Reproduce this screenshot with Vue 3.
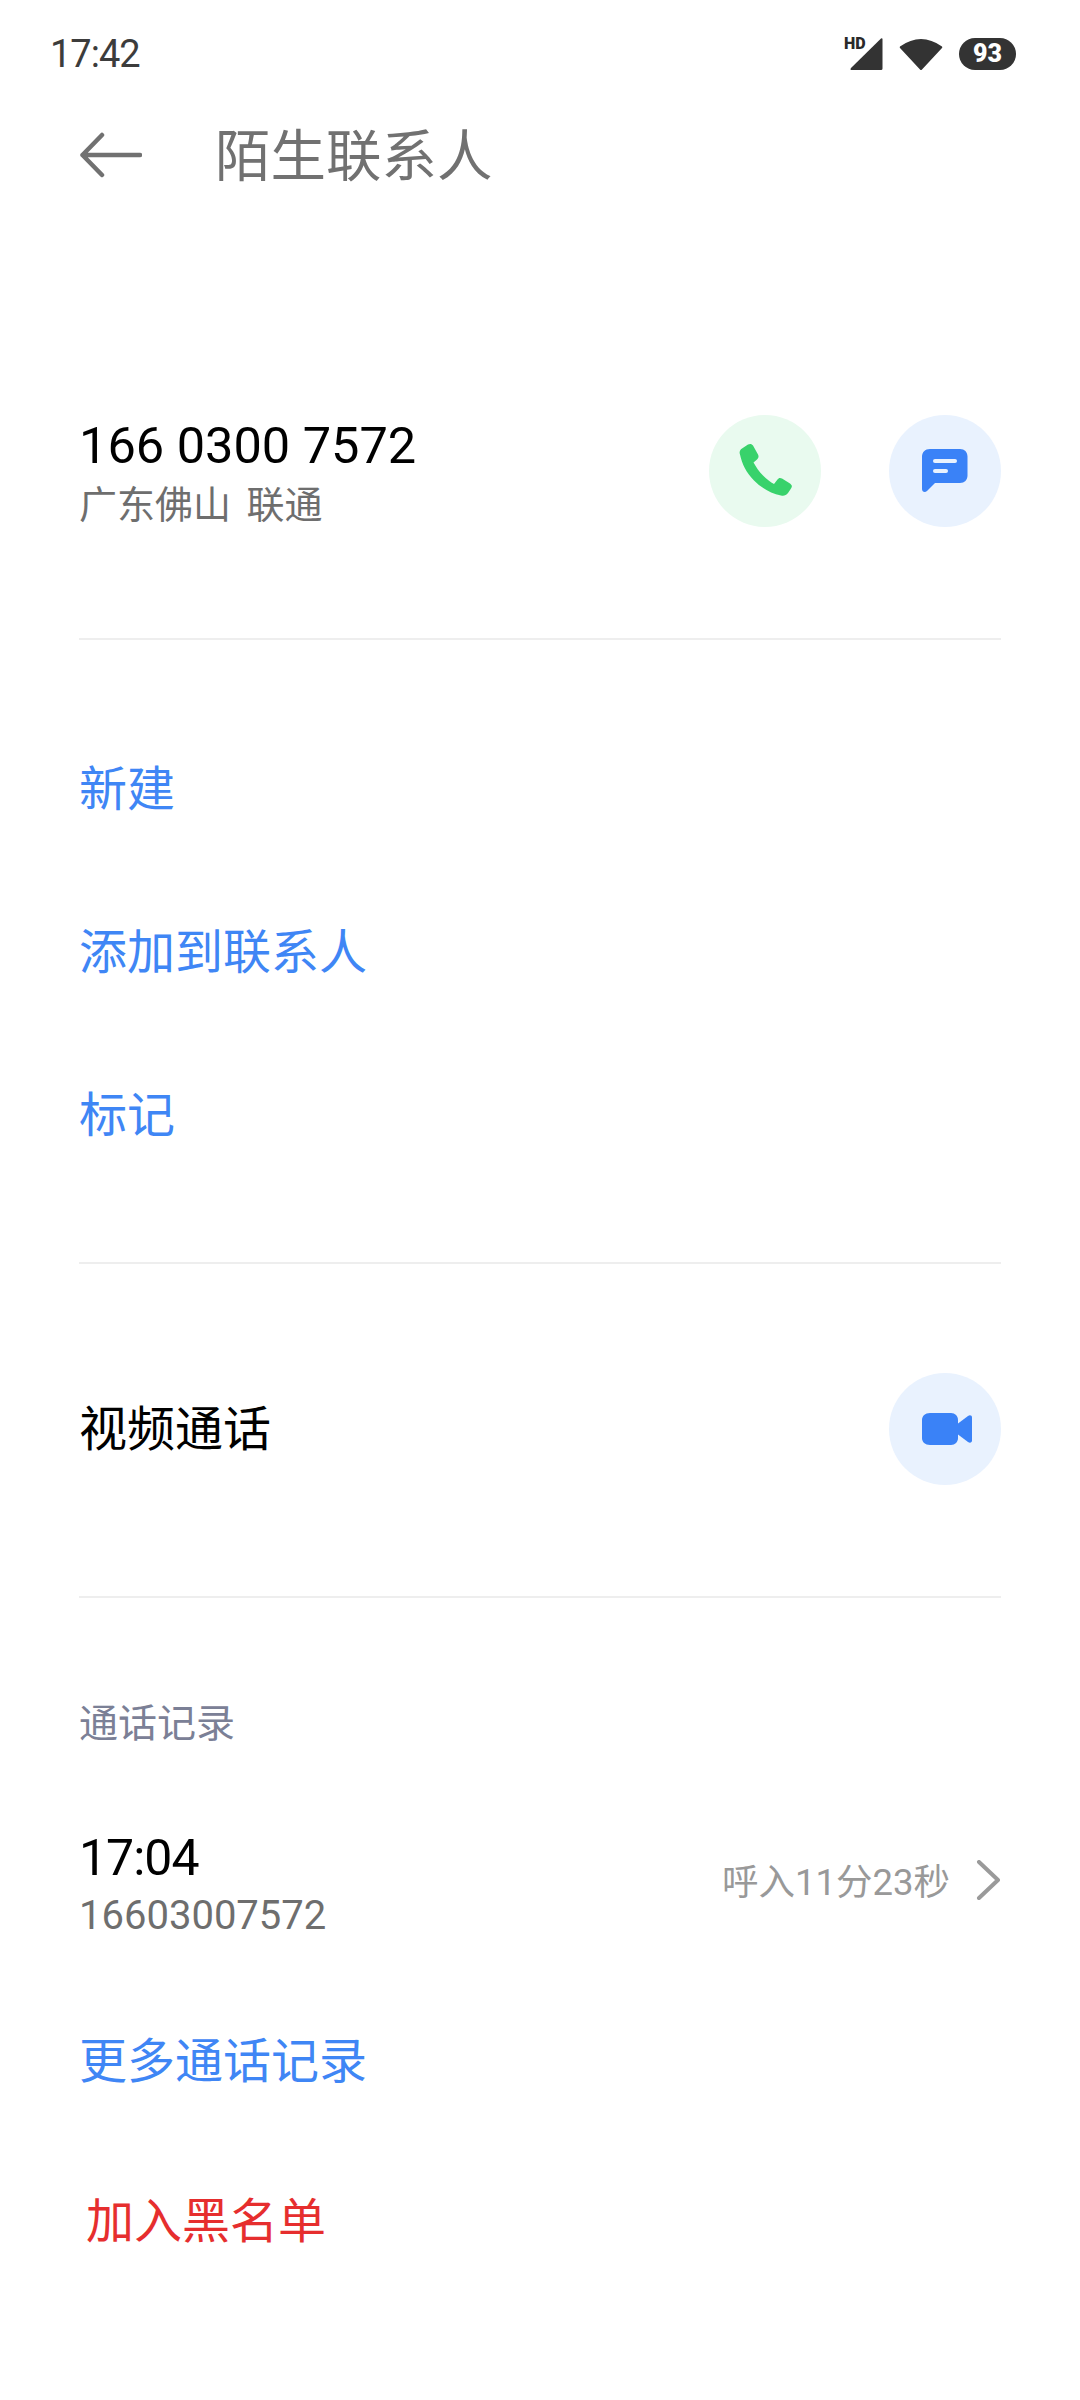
<template>
  <div class="page">
    <div class="status-bar">
      <span class="clock">17:42</span>
      <div class="status-icons">
        <div class="signal">
          <span class="hd">HD</span>
          <svg width="34" height="34" viewBox="0 0 34 34"><path d="M32 1.500Q33.500 0.500 33.500 2.500V31.500Q33.500 33 32 33H3Q0.500 33 2 31Z" fill="#333"/></svg>
        </div>
        <svg class="wifi" width="44" height="34" viewBox="0 0 44 34"><path d="M1 9.500Q22 -5.500 43 9.500Q43.500 10.500 43 11L23 32.500Q22 33.500 21 32.500L1 11Q0.500 10.500 1 9.500Z" fill="#333"/></svg>
        <span class="battery">93</span>
      </div>
    </div>

    <div class="app-bar">
      <svg class="back" width="63" height="46" viewBox="0 0 63 46" fill="none" stroke="#717171" stroke-width="4.500" stroke-linecap="round" stroke-linejoin="round"><path d="M61 23H3.500M23 3L3.500 23L23 43"/></svg>
      <span class="title">陌生联系人</span>
    </div>

    <section class="contact">
      <div class="contact-info">
        <div class="number">166 0300 7572</div>
        <div class="location">广东佛山 联通</div>
      </div>
      <div class="circle green">
        <svg width="56" height="56" viewBox="0 0 56 56"><path d="M3 11.500C2 9 3 7 5 5.500L11 1.500C13 0.500 15 1 16 2.500L21 11.500C22 13.500 21.500 15 20 16.500L16.500 19.500C19 24 22 28.500 26 32.500C30 36.500 33.500 39 37 41L40.500 36.500C41.500 35 43 34.500 45 35.500L53 40.500C55 42 55.500 43.500 54 45.500L51 50C49 52.500 47 53 44 52.500C34 50.500 25 45.500 17 37.500C9.500 30 5 21 3 11.500Z" fill="#38d26b"/></svg>
      </div>
      <div class="circle blue">
        <svg width="46" height="44" viewBox="0 0 46 44"><path d="M8 0H38C42.500 0 45.500 3 45.500 7.500V26.500C45.500 31 42.500 34 38 34H13L5 42C3 44 0 43 0 40V8C0 3 3 0 8 0Z" fill="#3a82f7"/><rect x="11" y="10" width="24" height="4" rx="2" fill="#e9f2fe"/><rect x="11" y="20" width="15" height="4" rx="2" fill="#e9f2fe"/></svg>
      </div>
    </section>

    <hr class="rule" />

    <section class="actions">
      <div v-for="item in actions" :key="item" class="action">{{ item }}</div>
    </section>

    <hr class="rule" />

    <section class="video">
      <span class="video-label">视频通话</span>
      <div class="circle blue">
        <svg class="video-icon" width="50" height="32" viewBox="0 0 50 32"><path d="M8 0H29C33 0 36 3 36 7V25C36 29 33 32 29 32H8C3 32 0 29 0 25V7C0 3 3 0 8 0Z" fill="#3a82f7"/><path d="M36 10.500L46 3C48 1.500 50 2.500 50 4.500V27.500C50 29.500 48 30.500 46 29L36 21.500Z" fill="#3a82f7"/></svg>
      </div>
    </section>

    <hr class="rule" />

    <div class="log-heading">通话记录</div>

    <section class="log-row">
      <div>
        <div class="log-time">17:04</div>
        <div class="log-number">16603007572</div>
      </div>
      <div class="log-detail">
        <span>呼入11分23秒</span>
        <svg width="26" height="40" viewBox="0 0 26 40" fill="none" stroke="#9a9a9a" stroke-width="4" stroke-linecap="round" stroke-linejoin="round"><path d="M4 2L23 20L4 38"/></svg>
      </div>
    </section>

    <div class="action more">更多通话记录</div>
    <div class="block">加入黑名单</div>
  </div>
</template>

<script setup>
const actions = ['新建', '添加到联系人', '标记']
</script>

<style>
html,
body {
  margin: 0;
  background: #fff;
}
</style>

<style scoped>
.page {
  width: 1080px;
  height: 2400px;
  overflow: hidden;
  box-sizing: border-box;
  background: #fff;
  font-family: Roboto, "Noto Sans CJK SC", sans-serif;
}

.status-bar {
  height: 108px;
  display: flex;
  align-items: center;
  justify-content: space-between;
  padding: 0 64px 0 50px;
}

.clock {
  font-size: 38px;
  letter-spacing: -1px;
  color: #3c3c3c;
}

.status-icons {
  display: flex;
  align-items: center;
  gap: 16px;
}

.signal {
  position: relative;
  width: 38px;
  height: 34px;
  display: flex;
  justify-content: flex-end;
}

.hd {
  position: absolute;
  left: -1px;
  top: -1px;
  font-size: 16px;
  font-weight: 900;
  color: #2a2a2a;
  line-height: 15px;
}

.battery {
  width: 57px;
  height: 32px;
  border-radius: 16px;
  background: #333;
  color: #fff;
  font-size: 25px;
  font-weight: 900;
  line-height: 32px;
  text-align: center;
}

.app-bar {
  height: 94px;
  display: flex;
  align-items: center;
  padding-left: 79px;
  gap: 73px;
}

.title {
  font-size: 55.500px;
  padding-bottom: 6px;
  color: #717171;
}

.contact {
  margin-top: 213px;
  height: 112px;
  padding: 0 79px 0 79px;
  display: flex;
  align-items: center;
}

.contact-info {
  flex: 1;
}

.number {
  font-size: 50.500px;
  line-height: 62px;
  color: #000;
}

.location {
  margin-top: 6px;
  font-size: 38px;
  word-spacing: 6px;
  line-height: 44px;
  color: #6e6e6e;
}

.circle {
  width: 112px;
  height: 112px;
  border-radius: 50%;
  display: flex;
  align-items: center;
  justify-content: center;
  flex-shrink: 0;
}

.circle.green {
  background: #e9faef;
  margin-right: 68px;
}

.circle.blue {
  background: #e9f2fe;
}

.video-icon {
  margin-left: 4px;
}

.rule {
  margin: 0 79px;
  border: 0;
  border-top: 2px solid #eeeeee;
}

.contact + .rule {
  margin-top: 111px;
}

.actions {
  padding: 63px 0 70px;
}

.action {
  height: 163px;
  padding-left: 79px;
  display: flex;
  align-items: center;
  font-size: 48px;
  color: #3f86f5;
}

.video {
  height: 330px;
  margin-bottom: 2px;
  padding: 0 79px;
  display: flex;
  align-items: center;
  justify-content: space-between;
}

.video-label {
  font-size: 48px;
  padding-bottom: 8px;
  color: #000;
}

.log-heading {
  margin-top: 96px;
  padding-left: 79px;
  font-size: 39px;
  line-height: 60px;
  color: #7b8096;
}

.log-row {
  margin-top: 74px;
  padding: 0 79px;
  display: flex;
  align-items: center;
  justify-content: space-between;
}

.log-time {
  font-size: 50px;
  letter-spacing: -1px;
  line-height: 60px;
  color: #000;
}

.log-number {
  font-size: 40px;
  line-height: 56px;
  color: #6e6e6e;
}

.log-detail {
  display: flex;
  align-items: center;
  gap: 25px;
  margin-bottom: 12px;
  font-size: 36.500px;
  color: #999;
}

.log-detail span {
  padding-bottom: 1px;
}

.more {
  margin-top: 31px;
}

.block {
  height: 157px;
  padding-left: 86px;
  display: flex;
  align-items: center;
  font-size: 48px;
  color: #e62e2e;
}
</style>
